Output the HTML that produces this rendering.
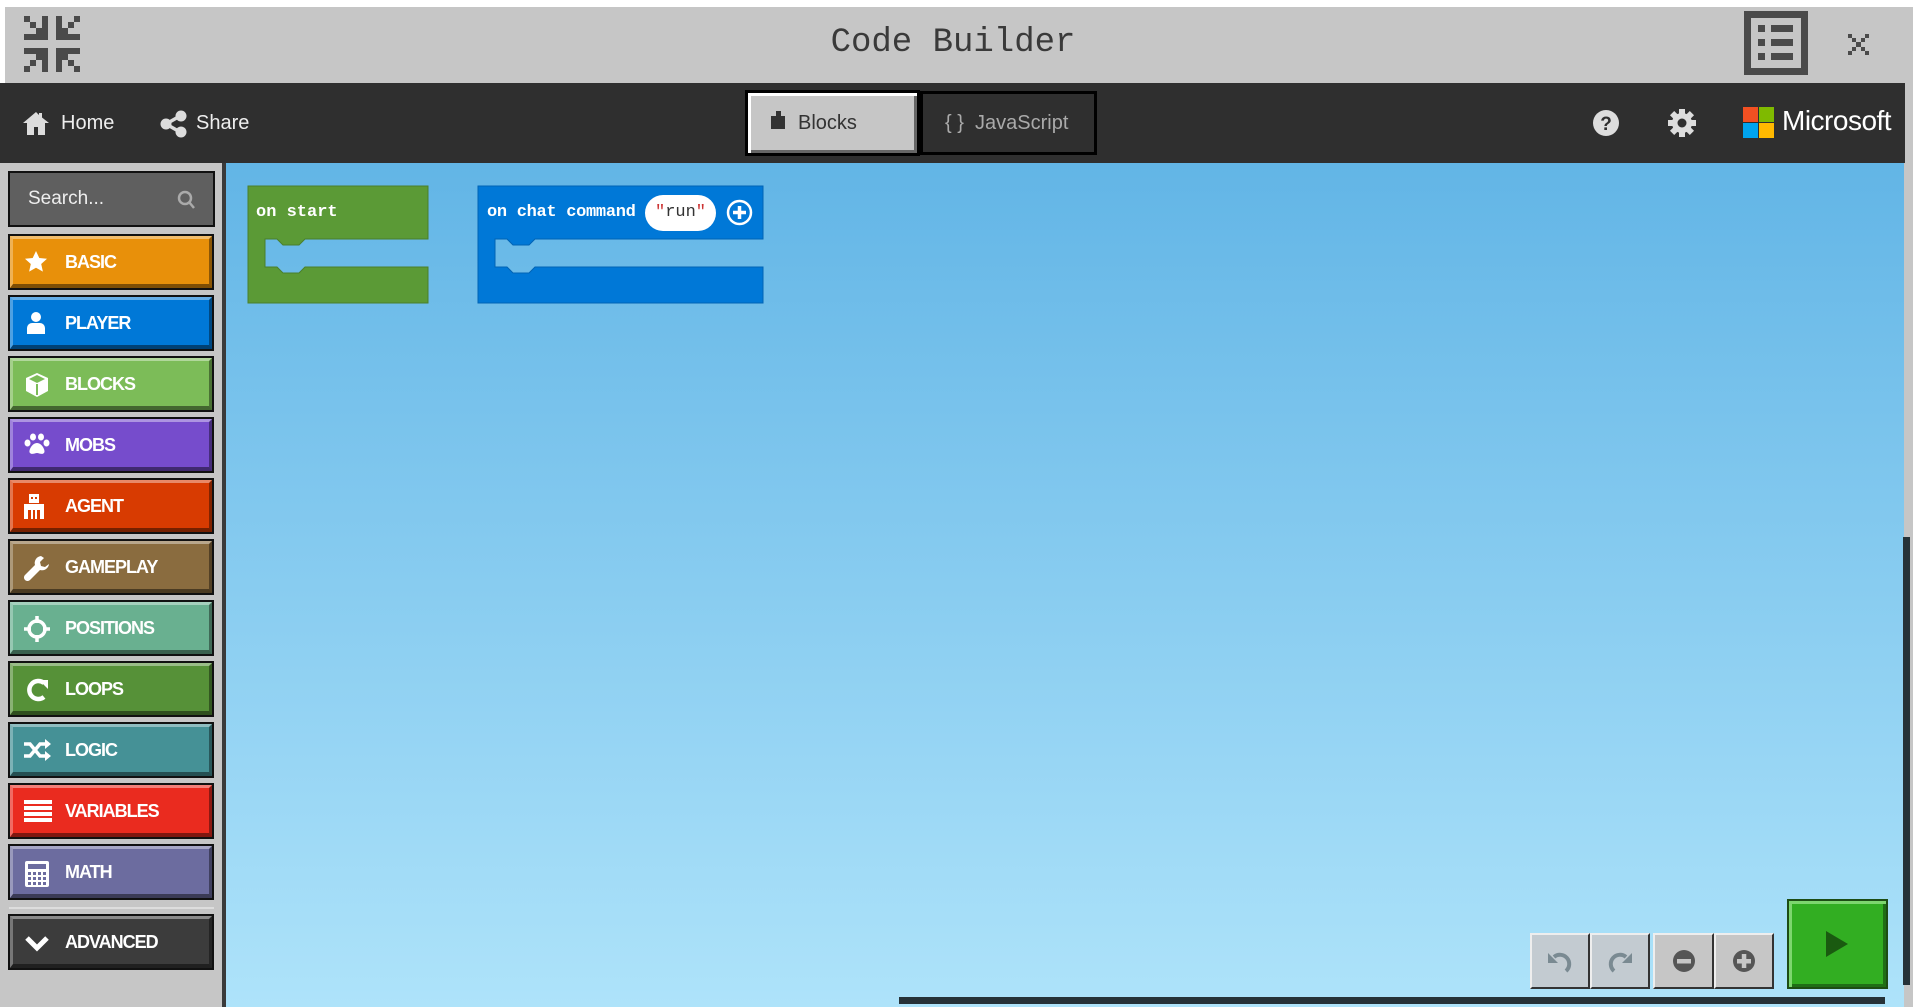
<!DOCTYPE html><html><head><style>
*{margin:0;padding:0;box-sizing:border-box}
body{width:1913px;height:1007px;overflow:hidden;position:relative;background:#fff;font-family:"Liberation Sans",sans-serif}
.a{position:absolute}
.cat{position:absolute;left:8px;width:206px;height:56px;border:2px solid #111;color:#fff;font-weight:bold;font-size:18px;letter-spacing:-1px}
.cat .in{position:absolute;inset:0;border-top:3px solid rgba(255,255,255,.4);border-left:3px solid rgba(255,255,255,.3);border-bottom:4px solid rgba(0,0,0,.45);border-right:3px solid rgba(0,0,0,.4)}
.cat span{position:absolute;left:55px;top:16px}
.cat svg{position:absolute;left:14px;top:14px}
.btn{position:absolute;border:2px solid #333;background:#c6c6c6;border-top-color:#eee;border-left-color:#eee}
.mono{font-family:"Liberation Mono",monospace;font-weight:bold}
</style></head><body>
<!-- title bar -->
<div class="a" style="left:5px;top:7px;width:1900px;height:76px;background:#c6c6c6"></div>
<div class="a" style="left:1904px;top:7px;width:9px;height:1000px;background:#c6c6c6"></div>
<svg class="a" style="left:24px;top:16px" width="56" height="56" viewBox="0 0 56 56" fill="#4a4a4a">
<path d="M0 0h6v6h6v6h6V0h6v24H0v-6h12v-6H6V6H0z"/><path d="M56 0h-6v6h-6v6h-6V0h-6v24h24v-6H44v-6h6V6h6z"/>
<path d="M0 32h24v24h-6V44h-6v6H6v6H0v-6h6v-6h6v-6H0z"/><path d="M32 32h24v6H44v6h6v6h6v6h-6v-6h-6v-6h-6v12h-6z"/></svg>
<div class="a mono" style="left:700px;top:24px;width:506px;text-align:center;font-size:34px;font-weight:normal;color:#3a3a3a;letter-spacing:0px">Code Builder</div>
<div class="a" style="left:1744px;top:11px;width:64px;height:64px;border:7px solid #4a4a4a"></div>
<svg class="a" style="left:1757px;top:24px" width="40" height="38" fill="#4a4a4a"><rect x="1" y="1" width="7" height="7"/><rect x="14" y="1" width="22" height="7"/><rect x="1" y="15" width="7" height="7"/><rect x="14" y="15" width="22" height="7"/><rect x="1" y="29" width="7" height="7"/><rect x="14" y="29" width="22" height="7"/></svg>
<svg class="a" style="left:1848px;top:34px" width="21" height="21" fill="#4a4a4a"><path d="M0 0h4v4h4v4h5V4h4V0h4v4h-4v4h-4v5h4v4h4v4h-4v-4h-4v-4H8v4H4v4H0v-4h4v-4h4V8H4V4H0z"/></svg>
<!-- nav -->
<div class="a" style="left:0;top:83px;width:1905px;height:80px;background:#2f2f2f"></div>
<svg class="a" style="left:23px;top:111px" width="26" height="24" viewBox="0 0 26 24" fill="#ddd"><path d="M13 1L0 12h4v12h7v-8h4v8h7V12h4L19 6.5V2h-3v2z"/></svg>
<div class="a" style="left:61px;top:112px;color:#eee;font-size:20px">Home</div>
<svg class="a" style="left:160px;top:110px" width="27" height="28" fill="#ddd"><circle cx="6" cy="14" r="5.5"/><circle cx="21" cy="6" r="5.5"/><circle cx="21" cy="22" r="5.5"/><path d="M6 12L20 4v4L6 16zM6 12l14 8v4L6 16z"/></svg>
<div class="a" style="left:196px;top:112px;color:#eee;font-size:20px">Share</div>
<div class="a" style="left:745px;top:90px;width:175px;height:66px;background:#c6c6c6;border:3px solid #000;box-shadow:inset 3px 3px 0 #fff,inset -3px -3px 0 #666"></div>
<svg class="a" style="left:771px;top:111px" width="14" height="18" fill="#333"><rect x="5" y="0" width="5" height="5"/><rect x="0" y="5" width="14" height="13"/></svg>
<div class="a" style="left:798px;top:112px;color:#333;font-size:20px">Blocks</div>
<div class="a" style="left:920px;top:91px;width:177px;height:64px;background:#2f2f2f;border:3px solid #000"></div>
<div class="a" style="left:945px;top:112px;color:#aaa;font-size:20px">{ }&nbsp; JavaScript</div>
<svg class="a" style="left:1592px;top:109px" width="28" height="28"><circle cx="14" cy="14" r="13" fill="#ddd"/><text x="14" y="21" text-anchor="middle" font-family="Liberation Sans" font-weight="bold" font-size="19" fill="#2f2f2f">?</text></svg>
<svg class="a" style="left:1668px;top:109px" width="28" height="28" viewBox="0 0 28 28"><g fill="#ddd" transform="translate(14 14)"><circle r="10"/><g id="t"><rect x="-3" y="-14" width="6" height="28"/></g><use href="#t" transform="rotate(45)"/><use href="#t" transform="rotate(90)"/><use href="#t" transform="rotate(135)"/></g><circle cx="14" cy="14" r="4.5" fill="#2f2f2f"/></svg>
<div class="a" style="left:1743px;top:107px;width:15px;height:15px;background:#f25022"></div>
<div class="a" style="left:1759px;top:107px;width:15px;height:15px;background:#7fba00"></div>
<div class="a" style="left:1743px;top:123px;width:15px;height:15px;background:#00a4ef"></div>
<div class="a" style="left:1759px;top:123px;width:15px;height:15px;background:#ffb900"></div>
<div class="a" style="left:1782px;top:105px;color:#fff;font-size:28px;letter-spacing:-0.5px">Microsoft</div>
<!-- sidebar -->
<div class="a" style="left:0;top:163px;width:222px;height:844px;background:#c6c6c6"></div>
<div class="a" style="left:222px;top:163px;width:4px;height:844px;background:#3a3a3a"></div>
<div class="a" style="left:8px;top:171px;width:207px;height:56px;background:#5f5f5f;border:2px solid #111"></div>
<div class="a" style="left:28px;top:188px;color:#eee;font-size:19px">Search...</div>
<svg class="a" style="left:177px;top:190px" width="18" height="20" fill="none" stroke="#aaa" stroke-width="2.5"><circle cx="8" cy="8" r="6"/><path d="M12 12l5 6"/></svg>
<div class="cat" style="top:234px;background:#e8900a"><div class="in"></div><svg width="24" height="24" viewBox="0 0 24 24" fill="#fff"><path d="M12 1l3.3 7 7.7.8-5.8 5.2 1.7 7.6L12 17.7 5.1 21.6l1.7-7.6L1 8.8 8.7 8z"/></svg><span>BASIC</span></div>
<div class="cat" style="top:295px;background:#0078d7"><div class="in"></div><svg width="24" height="24" fill="#fff"><circle cx="12" cy="6" r="5"/><path d="M3 23v-6a5 5 0 015-5h8a5 5 0 015 5v6z"/></svg><span>PLAYER</span></div>
<div class="cat" style="top:356px;background:#7cbc58"><div class="in"></div><svg width="26" height="26" viewBox="0 0 26 26" fill="#fff"><path d="M13 1l11 5v13l-11 6-11-6V6z"/><path d="M13 3L5 7l8 4 8-4z" fill="#7cbc58"/><path d="M13 12v11" stroke="#7cbc58" stroke-width="2"/></svg><span>BLOCKS</span></div>
<div class="cat" style="top:417px;background:#764ccc"><div class="in"></div><svg width="26" height="24" fill="#fff"><ellipse cx="9" cy="4" rx="3" ry="3.5"/><ellipse cx="17" cy="4" rx="3" ry="3.5"/><ellipse cx="3.5" cy="10" rx="3" ry="3.5"/><ellipse cx="22.5" cy="10" rx="3" ry="3.5"/><path d="M13 10c-5 0-9 8-7 10s5 0 7 0 5 2 7 0-2-10-7-10z"/></svg><span>MOBS</span></div>
<div class="cat" style="top:478px;background:#d83b01"><div class="in"></div><svg width="20" height="26" fill="#fff"><rect x="5" y="0" width="10" height="9"/><rect x="0" y="10" width="20" height="6"/><rect x="0" y="16" width="4" height="9"/><rect x="16" y="16" width="4" height="9"/><rect x="7" y="16" width="2" height="9"/><rect x="11" y="16" width="2" height="9"/><rect x="7" y="3" width="2" height="2" fill="#d83b01"/><rect x="11" y="3" width="2" height="2" fill="#d83b01"/></svg><span>AGENT</span></div>
<div class="cat" style="top:539px;background:#8a6c3f"><div class="in"></div><svg width="26" height="26" fill="#fff"><path d="M17 1a7 7 0 00-6 9L1 20a3 3 0 005 5l10-10a7 7 0 009-6l-4 3-4-1-1-4 4-4z"/></svg><span>GAMEPLAY</span></div>
<div class="cat" style="top:600px;background:#69b090"><div class="in"></div><svg width="26" height="26" fill="none" stroke="#fff" stroke-width="3.5"><circle cx="13" cy="13" r="8"/><path d="M13 0v7M13 19v7M0 13h7M19 13h7"/></svg><span>POSITIONS</span></div>
<div class="cat" style="top:661px;background:#569138"><div class="in"></div><svg width="26" height="26" fill="none" stroke="#fff" stroke-width="4.5"><path d="M20 6a9 9 0 100 14"/><path d="M15 3h9v9" fill="#fff" stroke="none"/></svg><span>LOOPS</span></div>
<div class="cat" style="top:722px;background:#459196"><div class="in"></div><svg width="28" height="24" fill="none" stroke="#fff" stroke-width="3.5"><path d="M0 6h6l10 12h6M0 18h6l10-12h6"/><path d="M21 1l6 5-6 5zM21 13l6 5-6 5z" fill="#fff" stroke="none"/></svg><span>LOGIC</span></div>
<div class="cat" style="top:783px;background:#ea2b1f"><div class="in"></div><svg width="28" height="24" fill="#fff"><rect y="1" width="28" height="4"/><rect y="7" width="28" height="4"/><rect y="13" width="28" height="4"/><rect y="19" width="28" height="4"/></svg><span>VARIABLES</span></div>
<div class="cat" style="top:844px;background:#6c6c9f"><div class="in"></div><svg width="26" height="28" fill="#fff"><rect x="1" y="1" width="24" height="26" rx="2"/><rect x="4" y="4" width="18" height="5" fill="#6c6c9f"/><g fill="#6c6c9f"><rect x="4" y="12" width="3" height="3"/><rect x="9" y="12" width="3" height="3"/><rect x="14" y="12" width="3" height="3"/><rect x="19" y="12" width="3" height="3"/><rect x="4" y="17" width="3" height="3"/><rect x="9" y="17" width="3" height="3"/><rect x="14" y="17" width="3" height="3"/><rect x="19" y="17" width="3" height="3"/><rect x="4" y="22" width="3" height="3"/><rect x="9" y="22" width="3" height="3"/><rect x="14" y="22" width="3" height="3"/><rect x="19" y="22" width="3" height="3"/></g></svg><span>MATH</span></div>
<div class="a" style="left:9px;top:907px;width:205px;height:2px;background:#ddd"></div>
<div class="cat" style="top:914px;background:#3c3c3c"><div class="in"></div><svg width="26" height="26" style="top:16px" fill="none" stroke="#fff" stroke-width="5"><path d="M3 6l10 10 10-10"/></svg><span>ADVANCED</span></div>
<!-- canvas -->
<div class="a" style="left:226px;top:163px;width:1678px;height:844px;background:linear-gradient(#62b5e6,#aee3fa)"></div>
<div class="a" style="left:1903px;top:537px;width:7px;height:448px;background:#263238"></div>
<div class="a" style="left:899px;top:997px;width:986px;height:7px;background:#263238"></div>
<!-- on start -->
<svg class="a" style="left:247px;top:185px" width="182" height="119"><path d="M1 1h180v53H58l-6 6H36l-6-6h-12v28h12l6 6h16l6-6h123v36H1z" fill="#5b9a36" stroke="#4a7f2c"/></svg>
<div class="a mono" style="left:256px;top:203px;color:#fff;font-size:17px">on start</div>
<!-- chat command -->
<svg class="a" style="left:477px;top:185px" width="287" height="119"><path d="M1 1h285v53H58l-6 6H36l-6-6h-12v28h12l6 6h16l6-6h228v36H1z" fill="#0078d7" stroke="#0063b5"/></svg>
<div class="a mono" style="left:487px;top:203px;color:#fff;font-size:17px;letter-spacing:-0.3px">on chat command</div>
<div class="a" style="left:645px;top:195px;width:71px;height:36px;background:#fff;border-radius:18px;font-family:'Liberation Mono',monospace;font-size:17px;color:#333;text-align:center;line-height:36px"><span style="color:#c33">"</span>run<span style="color:#c33">"</span></div>
<svg class="a" style="left:726px;top:199px" width="27" height="27"><circle cx="13.5" cy="13.5" r="11.5" fill="none" stroke="#fff" stroke-width="2.5"/><path d="M13.5 7v13M7 13.5h13" stroke="#fff" stroke-width="3.5"/></svg>
<!-- bottom buttons -->
<div class="btn" style="left:1530px;top:933px;width:60px;height:56px;background:#c3cbd1"></div>
<div class="btn" style="left:1590px;top:933px;width:60px;height:56px;background:#c3cbd1"></div>
<svg class="a" style="left:1546px;top:947px" width="28" height="28" fill="none" stroke="#7a8a92" stroke-width="4"><path d="M8 10a9 9 0 1112 14"/><path d="M2 6v10h10z" fill="#7a8a92" stroke="none"/></svg>
<svg class="a" style="left:1606px;top:947px" width="28" height="28" fill="none" stroke="#7a8a92" stroke-width="4"><path d="M20 10a9 9 0 10-12 14"/><path d="M26 6v10H16z" fill="#7a8a92" stroke="none"/></svg>
<div class="btn" style="left:1653px;top:933px;width:61px;height:56px"></div>
<div class="btn" style="left:1714px;top:933px;width:60px;height:56px"></div>
<svg class="a" style="left:1672px;top:949px" width="24" height="24"><circle cx="12" cy="12" r="11" fill="#555"/><rect x="5" y="10" width="14" height="4.5" fill="#c6c6c6"/></svg>
<svg class="a" style="left:1732px;top:949px" width="24" height="24"><circle cx="12" cy="12" r="11" fill="#555"/><rect x="5" y="10" width="14" height="4.5" fill="#c6c6c6"/><rect x="9.8" y="5" width="4.5" height="14" fill="#c6c6c6"/></svg>
<div class="a" style="left:1787px;top:899px;width:101px;height:90px;background:#32ae22;border:2px solid #1d4d14;box-shadow:inset 3px 3px 0 #7dd66e,inset -3px -3px 0 #1f6e16"></div>
<svg class="a" style="left:1824px;top:930px" width="26" height="28"><path d="M2 1l22 13L2 27z" fill="#1a5a10"/></svg>
</body></html>
